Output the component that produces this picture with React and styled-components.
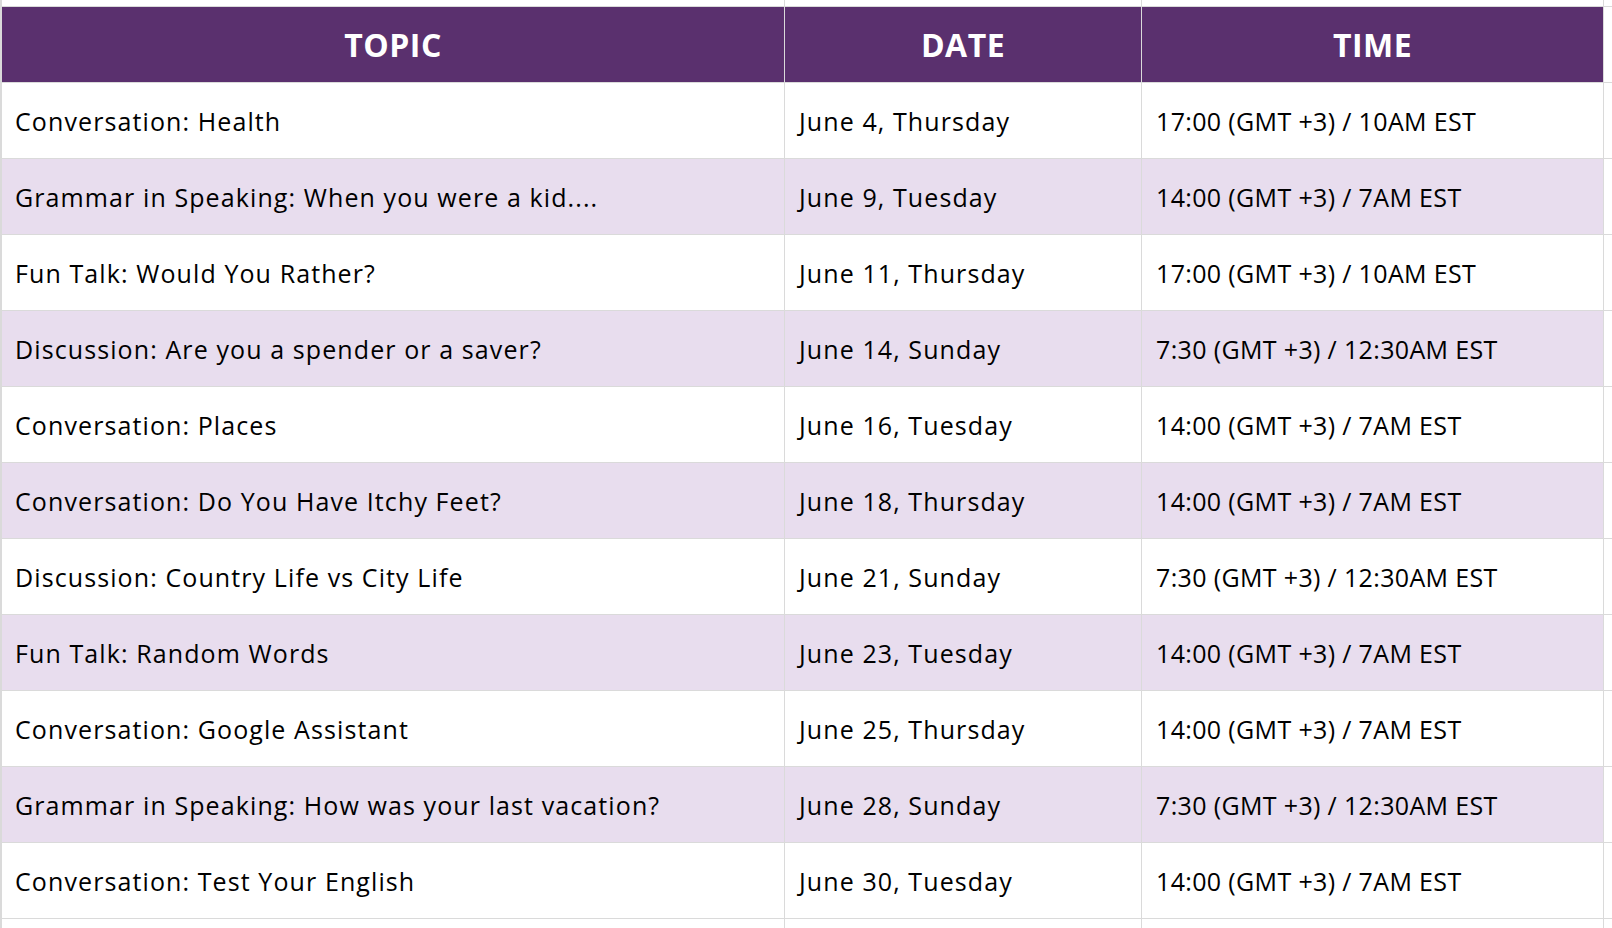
import React from "react";
import styled, { createGlobalStyle } from "styled-components";

const GlobalStyle = createGlobalStyle`
  html, body {
    margin: 0;
    padding: 0;
    background: #ffffff;
    overflow: hidden;
  }
  body {
    font-family: "Open Sans", "Noto Sans", sans-serif;
    color: #000000;
  }
`;

const Sheet = styled.div`
  display: grid;
  grid-template-columns: 782px 356px 461px 9px;
  grid-template-rows: 6px 75px repeat(11, 75px) 20px;
  gap: 1px;
  padding-left: 2px;
  width: 1612px;
  height: 928px;
  box-sizing: border-box;
  background: #dadada;
  overflow: hidden;
`;

const Blank = styled.div`
  background: #ffffff;
`;

const HeadCell = styled.div`
  background: #5a306e;
  color: #ffffff;
  font-family: "Open Sans", "Noto Sans", sans-serif;
  font-weight: 700;
  font-size: 32px;
  letter-spacing: 0.5px;
  display: flex;
  align-items: center;
  justify-content: center;
`;

const Cell = styled.div`
  background: ${(p) => (p.$shaded ? "#e8ddee" : "#ffffff")};
  display: flex;
  align-items: center;
  padding-left: ${(p) => (p.$first ? "13px" : "14px")};
  font-size: 25px;
  letter-spacing: ${(p) => (p.$tight ? "0.35px" : "1.1px")};
  white-space: nowrap;
  overflow: hidden;
`;

const rows = [
  ["Conversation: Health", "June 4, Thursday", "17:00 (GMT +3) / 10AM EST"],
  ["Grammar in Speaking: When you were a kid....", "June 9, Tuesday", "14:00 (GMT +3) / 7AM EST"],
  ["Fun Talk: Would You Rather?", "June 11, Thursday", "17:00 (GMT +3) / 10AM EST"],
  ["Discussion: Are you a spender or a saver?", "June 14, Sunday", "7:30 (GMT +3) / 12:30AM EST"],
  ["Conversation: Places", "June 16, Tuesday", "14:00 (GMT +3) / 7AM EST"],
  ["Conversation: Do You Have Itchy Feet?", "June 18, Thursday", "14:00 (GMT +3) / 7AM EST"],
  ["Discussion: Country Life vs City Life", "June 21, Sunday", "7:30 (GMT +3) / 12:30AM EST"],
  ["Fun Talk: Random Words", "June 23, Tuesday", "14:00 (GMT +3) / 7AM EST"],
  ["Conversation: Google Assistant", "June 25, Thursday", "14:00 (GMT +3) / 7AM EST"],
  ["Grammar in Speaking: How was your last vacation?", "June 28, Sunday", "7:30 (GMT +3) / 12:30AM EST"],
  ["Conversation: Test Your English", "June 30, Tuesday", "14:00 (GMT +3) / 7AM EST"],
];

export default function App() {
  return (
    <>
      <GlobalStyle />
      <Sheet>
        <Blank />
        <Blank />
        <Blank />
        <Blank />

        <HeadCell>TOPIC</HeadCell>
        <HeadCell>DATE</HeadCell>
        <HeadCell>TIME</HeadCell>
        <Blank />

        {rows.map((r, i) => (
          <React.Fragment key={i}>
            <Cell $shaded={i % 2 === 1} $first>{r[0]}</Cell>
            <Cell $shaded={i % 2 === 1}>{r[1]}</Cell>
            <Cell $shaded={i % 2 === 1} $tight>{r[2]}</Cell>
            <Blank />
          </React.Fragment>
        ))}

        <Blank />
        <Blank />
        <Blank />
        <Blank />
      </Sheet>
    </>
  );
}
